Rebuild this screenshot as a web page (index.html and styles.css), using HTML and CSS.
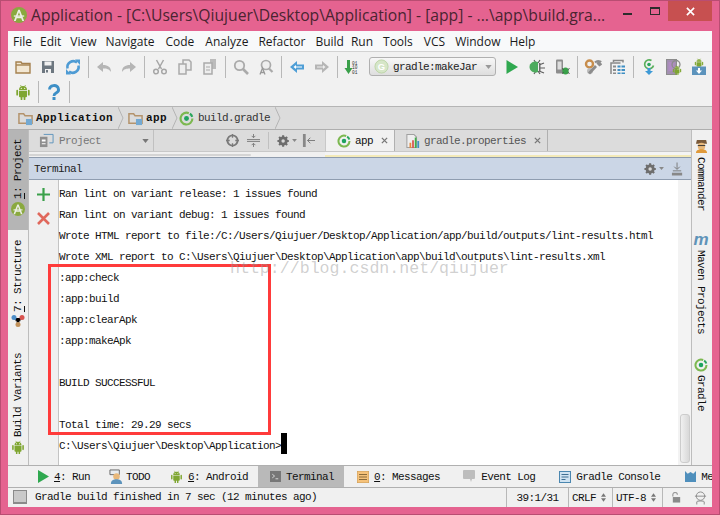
FILE: index.html
```html
<!DOCTYPE html>
<html lang="en">
<head>
<meta charset="utf-8">
<title>Application</title>
<link rel="stylesheet" href="styles.css">
</head>
<body>
<svg class="defs" width="0" height="0">
  <defs>
    <symbol id="android" viewBox="0 0 16 16">
      <path fill="#7fa631" d="M4 6a4 4 0 0 1 8 0zM4 6.7h8v5.6a1 1 0 0 1-1 1h-.6v2a.9.9 0 0 1-1.8 0v-2H7.400v2a.9.9 0 0 1-1.800 0v-2H5a1 1 0 0 1-1-1zM1.300 6.700a.9.9 0 0 1 1.800 0v4a.9.9 0 0 1-1.800 0zM12.900 6.700a.9.9 0 0 1 1.800 0v4a.9.9 0 0 1-1.800 0z"/>
      <path stroke="#7fa631" stroke-width=".7" d="M5.400 1l1 1.500M10.600 1l-1 1.500"/>
      <circle cx="6.300" cy="4.300" r=".6" fill="#fff"/><circle cx="9.700" cy="4.300" r=".6" fill="#fff"/>
    </symbol>
    <symbol id="gear" viewBox="0 0 16 16">
      <circle cx="7" cy="8" r="3.700" fill="none" stroke="#6e6e6e" stroke-width="3"/>
      <path stroke="#6e6e6e" stroke-width="2.400" d="M7 1.500v13M.5 8h13M2.400 3.400l9.200 9.200M11.600 3.400l-9.200 9.200"/>
      <circle cx="7" cy="8" r="2" fill="#d8d8d8"/>
    </symbol>
    <symbol id="gradle" viewBox="0 0 16 16">
      <path fill="none" stroke="#7cb850" stroke-width="2.300" d="M10.500 2.300A6.300 6.300 0 1 0 14.300 8"/>
      <path fill="none" stroke="#2aa65c" stroke-width="2.300" d="M11.600 2.900a6 6 0 0 1 2.500 3.300"/>
      <circle cx="8" cy="8" r="2.600" fill="#1fa35f"/>
    </symbol>
    <symbol id="crumbfolder" viewBox="0 0 16 16">
      <path fill="none" stroke="#b4936c" stroke-width="1.600" d="M1 13V3h5l1.500 2H15v8z"/>
      <rect x="8.500" y="8.500" width="6.500" height="6.500" fill="#73a9d2"/>
    </symbol>
    <symbol id="studio" viewBox="0 0 20 20">
      <circle cx="10" cy="10" r="10" fill="#8aa93f"/>
      <path fill="#ecefe6" d="M9 3.500h2l5.500 14h-2.400L12.800 14H7.200l-1.300 3.500H3.500z"/>
      <path fill="#8aa93f" d="M8 12h4l-2-5.500z"/>
      <rect x="3.500" y="10.500" width="13" height="1.600" fill="#ecefe6"/>
    </symbol>
  </defs>
</svg>

<div class="window">
  <header class="titlebar">
    <svg class="appicon" viewBox="0 0 20 20" width="16" height="16"><use href="#studio"/></svg>
    <h1 class="apptitle">Application - [C:\Users\Qiujuer\Desktop\Application] - [app] - ...\app\build.gra...</h1>
    <div class="winctl">
      <span class="wmin"></span>
      <span class="wmax"></span>
      <span class="wclose"><svg viewBox="0 0 10 10" width="9" height="9"><path stroke="#fff" stroke-width="1.800" d="M1 1l8 8M9 1l-8 8"/></svg></span>
    </div>
  </header>

  <main class="frame">
    <nav class="menubar">
      <span class="m1">File</span><span class="m2">Edit</span><span class="m3">View</span><span class="m4">Navigate</span><span class="m5">Code</span><span class="m6">Analyze</span><span class="m7">Refactor</span><span class="m8">Build</span><span class="m9">Run</span><span class="m10">Tools</span><span class="m11">VCS</span><span class="m12">Window</span><span class="m13">Help</span>
    </nav>

    <div class="toolbar">
      <div class="tbrow">
        <span class="ti"><svg viewBox="0 0 16 16"><path fill="#f2e7d3" stroke="#a5814f" stroke-width="1.400" d="M1 14V3h5l1 1.500h8V14z"/><path stroke="#a5814f" stroke-width="1.400" d="M1 6h14"/></svg></span>
        <span class="ti"><svg viewBox="0 0 16 16"><path fill="#6d7780" d="M2 2h12v12H2z"/><path fill="#f1f1f1" d="M4.500 2.500h7v4h-7zM5 10h6v4H5z"/><path fill="#6d7780" d="M6 11h2v2.500H6z"/></svg></span>
        <span class="ti"><svg viewBox="0 0 16 16"><path fill="none" stroke="#4e9bd4" stroke-width="2.600" d="M2.500 9.500a6 6 0 0 1 9.500-6M13.500 6.500a6 6 0 0 1-9.500 6"/><path fill="#4e9bd4" d="M10 .5h5v5.500zM6 15.500H1V10z"/></svg></span>
        <span class="sep"></span>
        <span class="ti"><svg viewBox="0 0 16 16"><path fill="#b5b5b5" d="M1 8l6-5v3c5 0 8 2 8 7-2-3-4-3.500-8-3.500V13z"/></svg></span>
        <span class="ti"><svg viewBox="0 0 16 16"><path fill="#b5b5b5" d="M15 8L9 3v3C4 6 1 8 1 13c2-3 4-3.500 8-3.500V13z"/></svg></span>
        <span class="sep"></span>
        <span class="ti"><svg viewBox="0 0 16 16"><path stroke="#a6a6a6" stroke-width="1.500" fill="none" d="M4.500 1l5 9M11.500 1l-5 9"/><circle cx="4" cy="12.500" r="2.300" fill="none" stroke="#a6a6a6" stroke-width="1.500"/><circle cx="12" cy="12.500" r="2.300" fill="none" stroke="#a6a6a6" stroke-width="1.500"/></svg></span>
        <span class="ti"><svg viewBox="0 0 16 16"><path fill="#eee" stroke="#aaa" stroke-width="1.500" d="M6 1h6l2 2v8H6z"/><path fill="#eee" stroke="#aaa" stroke-width="1.500" d="M2 5h7v10H2z"/></svg></span>
        <span class="ti"><svg viewBox="0 0 16 16"><path fill="#bbb" d="M8 0h6v10H8z"/><path fill="#eee" stroke="#aaa" stroke-width="1.500" d="M2 4h8v11H2z"/><path stroke="#aaa" d="M4 8h4M4 11h4"/></svg></span>
        <span class="sep"></span>
        <span class="ti"><svg viewBox="0 0 16 16"><circle cx="6.500" cy="6.500" r="4.700" fill="#eee" stroke="#aaa" stroke-width="1.800"/><path stroke="#aaa" stroke-width="2.600" d="M10 10l5 5"/></svg></span>
        <span class="ti"><svg viewBox="0 0 16 16"><circle cx="8" cy="6" r="4.500" fill="#eee" stroke="#aaa" stroke-width="1.700"/><path fill="none" stroke="#999" stroke-width="1.300" d="M2 15.500L4.500 9 7 15.500M3 13.500h3"/><path stroke="#aaa" stroke-width="2.200" d="M11 9.500l3.500 3.500"/></svg></span>
        <span class="sep"></span>
        <span class="ti"><svg viewBox="0 0 16 16"><path fill="#4e9ed6" d="M1 8l7-6v3.500h7v5H8V14z"/><path fill="#fff" d="M4.500 8L7 6v1.500h6v1H7V10z"/></svg></span>
        <span class="ti"><svg viewBox="0 0 16 16"><path fill="#b5b5b5" d="M15 8L8 2v3.500H1v5h7V14z"/><path fill="#eee" d="M11.500 8L9 6v1.500H3v1h6V10z"/></svg></span>
        <span class="sep"></span>
        <span class="ti"><svg viewBox="0 0 16 16"><path fill="#3aa04a" d="M2 1h3v8h2.500L3.500 15-.5 9H2z"/><text class="bin" x="7" y="5.500">01</text><text class="bin" x="7" y="10">10</text><text class="bin" x="7" y="14.500">01</text></svg></span>
        <span class="combo"><svg class="comboicon" viewBox="0 0 16 16" width="15" height="15"><circle cx="8" cy="8" r="7" fill="#d6e6c8" stroke="#bcd4a8"/><text class="gletter" x="8" y="11.500">G</text></svg><span class="combotext">gradle:makeJar</span><svg class="caret" viewBox="0 0 8 5" width="7" height="4"><path fill="#999" d="M0 0h8L4 5z"/></svg></span>
        <span class="ti"><svg viewBox="0 0 16 16"><path fill="#2fa84f" d="M2.500 1l11.500 7-11.500 7z"/></svg></span>
        <span class="ti"><svg viewBox="0 0 16 16"><path stroke="#5f5f5f" stroke-width="1.200" d="M5 1l2 3M11 1L9 4M10 6l5-2M10 9h6M10 12l5 2M5 15l2-3M11 15l-2-3"/><path fill="#4dab5e" d="M9 3a6 5.500 0 1 0 0 10z"/><path fill="#6b6b6b" d="M10 4h1.500v8H10z"/></svg></span>
        <span class="ti"><svg viewBox="0 0 16 16"><rect x="2" y="0.500" width="7" height="14" rx="1" fill="#8d8d8d"/><rect x="3.500" y="2.500" width="4" height="8" fill="#ddd"/><ellipse cx="11.500" cy="12" rx="3.200" ry="3.500" fill="#3aa04a"/><path stroke="#444" d="M8 9.500l1.500 1M15.500 9.500L14 10.500M8 14.500l1.500-1M15.500 14.500L14 13.500"/></svg></span>
        <span class="sep"></span>
        <span class="ti"><svg viewBox="0 0 16 16"><circle cx="4.500" cy="5" r="3.500" fill="none" stroke="#c78d4c" stroke-width="2.400"/><circle cx="5" cy="12" r="3" fill="#bbb"/><path stroke="#8c8c8c" stroke-width="2.800" d="M4 14.500l7-7.500"/><path fill="none" stroke="#8c8c8c" stroke-width="2.200" d="M10 3.500c2-2 4-1.500 5-1l-2 2 1.500 1.500 2-1.500"/></svg></span>
        <span class="ti"><svg viewBox="0 0 16 16"><path fill="none" stroke="#888" stroke-width="1.500" d="M3.500 3V1.500H13v2M1 15V4h9.500"/><path fill="#8c8c8c" d="M3 6.500h3v2H3zM3 10h3v2H3zM3 13.500h3V15H3z"/><path fill="#3f8fc4" d="M7.500 6.500h3v2h-3zM11.500 6.500h3.500v2h-3.500zM7.500 10h3v2h-3zM11.500 10h3.500v2h-3.500zM7.500 13.500h3V15h-3zM11.500 13.500h3.500V15h-3.500z"/></svg></span>
        <span class="sep"></span>
        <span class="ti"><svg viewBox="0 0 16 16"><path fill="none" stroke="#59b05b" stroke-width="1.700" d="M10.500 1.500a4.500 4.500 0 1 0 2 5"/><circle cx="8" cy="5.500" r="1.800" fill="#2aa65c"/><path fill="#3e9ad6" d="M6.500 9h3v3H12l-4 4-4-4h2.500z"/></svg></span>
        <span class="ti"><svg viewBox="0 0 16 16"><rect x="0.500" y="0.500" width="10" height="15" fill="#a28fb0" stroke="#8c8c8c"/><rect x="2.500" y="3" width="6" height="9" fill="#b08bc4"/><circle cx="10" cy="5.500" r="4" fill="none" stroke="#8c8c8c" stroke-width="1.300"/><use href="#android" x="6" y="6" width="10" height="10"/></svg></span>
        <span class="ti tilast"><svg viewBox="0 0 16 16"><use href="#android" x="2" y="-1" width="12" height="10"/><path fill="#5c93bc" d="M1 7.500h14V16H1z"/><path fill="#fff" d="M7 9h2v2.500h2L8 15l-3-3.500h2z"/></svg></span>
      </div>
      <div class="tbrow">
        <span class="ti"><svg viewBox="0 0 16 16"><use href="#android"/></svg></span>
        <span class="sep"></span>
        <span class="ti"><svg viewBox="0 0 16 16"><path fill="none" stroke="#3d8fc6" stroke-width="2.800" d="M3.500 5.500a4.500 4 0 1 1 6.500 3.600c-1.600.8-2 1.500-2 3"/><rect x="6.500" y="13" width="3" height="3" fill="#3d8fc6"/></svg></span>
        <span class="sep"></span>
      </div>
    </div>

    <div class="crumbs">
      <svg class="cfold" viewBox="0 0 16 16" width="15" height="15"><use href="#crumbfolder"/></svg><b class="cbold">Application</b><svg class="chev" viewBox="0 0 6 22" width="6" height="22"><path fill="none" stroke="#b4b4b4" d="M0 0l5 11-5 11"/></svg>
      <svg class="cfold2" viewBox="0 0 16 16" width="15" height="15"><use href="#crumbfolder"/></svg><b class="cbold">app</b><svg class="chev" viewBox="0 0 6 22" width="6" height="22"><path fill="none" stroke="#b4b4b4" d="M0 0l5 11-5 11"/></svg>
      <svg class="cgradle" viewBox="0 0 16 16" width="15" height="15"><use href="#gradle"/></svg><span class="cfile">build.gradle</span><svg class="chev" viewBox="0 0 6 22" width="6" height="22"><path fill="none" stroke="#b4b4b4" d="M0 0l5 11-5 11"/></svg>
    </div>

    <div class="workspace">
      <aside class="rail railleft">
        <div class="railtab active">
          <span class="vtext vflip"><u>1</u>: Project</span>
          <svg viewBox="0 0 20 20" width="14" height="14"><use href="#studio"/></svg>
        </div>
        <div class="railtab rstruct">
          <span class="vtext vflip"><u>7</u>: Structure</span>
          <svg viewBox="0 0 14 14" width="14" height="14"><path stroke="#888" d="M3 4l4 6 4-6"/><circle cx="3" cy="3.500" r="2.500" fill="#4e8fc9"/><circle cx="11" cy="3.500" r="2.500" fill="#d9534f"/><circle cx="7" cy="10.500" r="2.500" fill="#c1915a"/></svg>
        </div>
        <div class="railtab rvariants">
          <span class="vtext vflip">Build Variants</span>
          <svg viewBox="0 0 16 16" width="14" height="14"><use href="#android"/></svg>
        </div>
      </aside>

      <section class="center">
        <div class="toolrow">
          <div class="projcombo">
            <svg viewBox="0 0 16 16" width="15" height="15"><path fill="#8f8f8f" d="M1 4h8v11H1z"/><path fill="#fff" d="M3 7h4v2H3zM3 11h4v1H3z"/><path fill="none" stroke="#5c93bc" d="M5 1.500h10v9h-4"/></svg>
            <span class="projlabel">Project</span>
            <svg class="projcaret" viewBox="0 0 8 5" width="7" height="4"><path fill="#777" d="M0 0h8L4 5z"/></svg>
          </div>
          <div class="projtools">
            <svg class="pt1" viewBox="0 0 14 14" width="13" height="13"><circle cx="7" cy="7" r="5.500" fill="none" stroke="#7a7a7a" stroke-width="2"/><path stroke="#7a7a7a" stroke-width="1.400" d="M7 0v4M7 10v4M0 7h4M10 7h4"/></svg>
            <svg class="pt2" viewBox="0 0 14 14" width="13" height="13"><path stroke="#7a7a7a" fill="none" d="M0 6h14M0 8h14M7 0v4M5 2l2 2 2-2M7 14v-4M5 12l2-2 2 2"/></svg>
            <span class="pt3"></span>
            <svg class="pt4" viewBox="0 0 16 16" width="14" height="14"><use href="#gear"/></svg>
            <svg class="pt5" viewBox="0 0 8 5" width="5" height="3"><path fill="#888" d="M0 0h8L4 5z"/></svg>
            <svg class="pt6" viewBox="0 0 14 14" width="13" height="13"><path fill="#888" d="M1 0h3v14H1z"/><path stroke="#777" d="M6 7h8M9 4L6 7l3 3" fill="none"/></svg>
          </div>
          <div class="edtab edactive">
            <svg viewBox="0 0 16 16" width="14" height="14"><use href="#gradle"/></svg>
            <span class="edlabel dark">app</span>
            <svg class="edx" viewBox="0 0 8 8" width="7" height="7"><path stroke="#777" stroke-width="1.500" d="M1 1l6 6M7 1L1 7"/></svg>
          </div>
          <div class="edtab edother">
            <svg viewBox="0 0 16 16" width="14" height="14"><path fill="#eee" stroke="#a0a0a0" stroke-width="1.200" d="M1 .5h8l3 3v12H1z"/><path fill="#e58a3a" d="M4 10h2v6H4z"/><path fill="#d9534f" d="M7 7h2v9H7z"/><path fill="#3fae4a" d="M10 4h2v12h-2z"/><path fill="#3f8fc4" d="M13 8h2v8h-2z"/></svg>
            <span class="edlabel">gradle.properties</span>
            <svg class="edx" viewBox="0 0 8 8" width="7" height="7"><path stroke="#777" stroke-width="1.500" d="M1 1l6 6M7 1L1 7"/></svg>
          </div>
        </div>
        <div class="tabstrip"><div class="stripleft"><span class="stripbar"></span></div><div class="stripright"></div></div>

        <div class="termhead">
          <span class="termtitle">Terminal</span>
          <svg class="thgear" viewBox="0 0 16 16" width="14" height="14"><use href="#gear"/></svg>
          <svg class="thcaret" viewBox="0 0 8 5" width="5" height="3"><path fill="#888" d="M0 0h8L4 5z"/></svg>
          <svg class="thhide" viewBox="0 0 14 14" width="13" height="14"><path stroke="#777" fill="none" d="M6.500 0v7M3.500 4.500l3 3 3-3M2 9h9"/><path fill="#888" d="M1 11h11v3H1z"/></svg>
        </div>

        <div class="termbody">
          <div class="gutter">
            <svg viewBox="0 0 13 13" width="13" height="13"><path stroke="#3aa04a" stroke-width="2.200" d="M6.500 0v13M0 6.500h13"/></svg>
            <svg viewBox="0 0 13 13" width="13" height="13"><path stroke="#e0685c" stroke-width="2.600" d="M1 1l11 11M12 1L1 12"/></svg>
          </div>
          <div class="output">
            <div class="ln">Ran lint on variant release: 1 issues found</div>
            <div class="ln">Ran lint on variant debug: 1 issues found</div>
            <div class="ln">Wrote HTML report to file:/C:/Users/Qiujuer/Desktop/Application/app/build/outputs/lint-results.html</div>
            <div class="ln">Wrote XML report to C:\Users\Qiujuer\Desktop\Application\app\build\outputs\lint-results.xml</div>
            <div class="ln">:app:check</div>
            <div class="ln">:app:build</div>
            <div class="ln">:app:clearApk</div>
            <div class="ln">:app:makeApk</div>
            <div class="ln">&nbsp;</div>
            <div class="ln">BUILD SUCCESSFUL</div>
            <div class="ln">&nbsp;</div>
            <div class="ln">Total time: 29.29 secs</div>
            <div class="ln">C:\Users\Qiujuer\Desktop\Application&gt;<span class="cursor"></span></div>
            <div class="redbox"></div>
            <div class="watermark">http://blog.csdn.net/qiujuer</div>
          </div>
          <div class="scrolltrack"><span class="thumb"></span></div>
        </div>
      </section>

      <aside class="rail railright">
        <svg class="rr1" viewBox="0 0 14 14" width="13" height="13"><path fill="#7a5a3a" d="M2 0h10l1 4H1z"/><circle cx="7" cy="7" r="4" fill="#e8b87a"/><path fill="#e09a3a" d="M1 14c0-3 3-4 6-4s6 1 6 4z"/><path fill="#333" d="M3 5.500h8v1H3z"/></svg>
        <span class="vtext rt1">Commander</span>
        <span class="mlogo">m</span>
        <span class="vtext rt2">Maven Projects</span>
        <svg class="rr3" viewBox="0 0 16 16" width="14" height="14"><use href="#gradle"/></svg>
        <span class="vtext rt3">Gradle</span>
      </aside>
    </div>

    <div class="bottomtabs">
      <span class="bt b1"><svg viewBox="0 0 12 14" width="11" height="13"><path fill="#2fa84f" d="M0 0l12 7-12 7z"/></svg><span><u>4</u>: Run</span></span>
      <span class="bt b2"><svg viewBox="0 0 16 16" width="15" height="15"><path fill="#e8ecef" stroke="#666" d="M1 1h10v5H1z"/><circle cx="8" cy="8" r="3.500" fill="#e8b87a"/><path fill="#5c93bc" d="M2 16c0-4 3-5 6-5s6 1 6 5z"/></svg><span>TODO</span></span>
      <span class="bt b3"><svg viewBox="0 0 16 16" width="13" height="13"><use href="#android"/></svg><span><u>6</u>: Android</span></span>
      <span class="bt b4"><svg viewBox="0 0 12 12" width="11" height="11"><path fill="#777" d="M0 0h12v12H0z"/><path fill="none" stroke="#ddd" d="M2.500 3.500l2.500 2-2.500 2M6 8.500h3"/></svg><span>Terminal</span></span>
      <span class="bt b5"><svg viewBox="0 0 12 12" width="12" height="12"><rect width="12" height="12" fill="#f6c27a" stroke="#c79a5a"/><path stroke="#8a6a3a" d="M2 3.500h8M2 6h8M2 8.500h8"/></svg><span><u>0</u>: Messages</span></span>
      <span class="bt b6"><svg viewBox="0 0 12 13" width="12" height="13"><path fill="#bdbdbd" d="M1 0h10a1 1 0 0 1 1 1v7a1 1 0 0 1-1 1H9l-1 3-1-3H1a1 1 0 0 1-1-1V1a1 1 0 0 1 1-1z"/></svg><span>Event Log</span></span>
      <span class="bt b7"><svg viewBox="0 0 12 12" width="12" height="12"><rect x=".5" y=".5" width="11" height="11" fill="#cfe3f2" stroke="#4b87b0"/><path stroke="#3f6f92" d="M2.500 3.500h7M2.500 6h7M2.500 8.500h4"/></svg><span>Gradle Console</span></span>
      <span class="bt b8"><svg viewBox="0 0 12 12" width="11" height="11"><path fill="#4f8fbc" d="M0 0l3 3 3-2 3 2 3-3v12H0z"/></svg><span>Me</span></span>
    </div>

    <footer class="status">
      <span class="sbox"></span>
      <span class="smsg">Gradle build finished in 7 sec (12 minutes ago)</span>
      <span class="scell c1">39:1/31</span>
      <span class="scell c2">CRLF<svg viewBox="0 0 6 10" width="5" height="9"><path fill="#777" d="M3 0l3 4H0zM3 10L0 6h6z"/></svg></span>
      <span class="scell c3">UTF-8<svg viewBox="0 0 6 10" width="5" height="9"><path fill="#777" d="M3 0l3 4H0zM3 10L0 6h6z"/></svg></span>
      <span class="scell c4">
        <svg viewBox="0 0 12 12" width="11" height="11"><path fill="none" stroke="#9a9a9a" stroke-width="1.300" d="M2 5V3a2.500 2.500 0 0 1 5 0"/><rect x="2" y="5.500" width="8" height="6" fill="#8a8a8a"/></svg>
        <svg viewBox="0 0 14 14" width="13" height="14"><circle cx="7" cy="5" r="4.500" fill="none" stroke="#888"/><path fill="none" stroke="#888" d="M1 5h12M3 14v-3c0-1 8-1 8 0v3"/></svg>
      </span>
    </footer>
  </main>
</div>
</body>
</html>
```
FILE: styles.css
```css
* { box-sizing: border-box; }
html, body { margin: 0; padding: 0; }
body {
  width: 720px;
  height: 515px;
  overflow: hidden;
  background: #e56390;
  font-family: "Liberation Mono", monospace;
  font-size: 11px;
  color: #111;
}
.defs { position: absolute; }
svg { display: block; flex: none; }
.window {
  height: 515px;
  padding: 0 8px 7px;
  border: 1px solid #b94d72;
  display: flex;
  flex-direction: column;
  margin: 0;
}
.titlebar {
  height: 30px;
  flex: none;
  display: flex;
  align-items: flex-start;
  margin: 0 -1px 0 -7px;
  padding-left: 3px;
  position: relative;
}
.appicon { margin-top: 6px; margin-left: 6px; }
.apptitle {
  margin: 0 0 0 4px;
  font: 400 15.7px/29px "Open Sans", sans-serif;
  color: #4a2431;
  white-space: nowrap;
}
.winctl { position: absolute; right: 0; top: 0; height: 20px; width: 96px; }
.wmin { position: absolute; left: 7px; top: 12px; width: 9px; height: 2px; background: #2c2c2c; }
.wmax { position: absolute; left: 34px; top: 6px; width: 10px; height: 8px; border: 1px solid #2c2c2c; border-top-width: 2px; }
.wclose {
  position: absolute;
  right: 0;
  top: 0;
  width: 44px;
  height: 20px;
  background: #c75050;
  display: flex;
  align-items: center;
  justify-content: center;
}
.frame {
  flex: 1;
  min-height: 0;
  margin: 0 -1px;
  display: flex;
  flex-direction: column;
  background: #f1f1f1;
  overflow: hidden;
}
.menubar {
  height: 21px;
  flex: none;
  background: #f8f9fa;
  border-bottom: 1px solid #d2d2d2;
  display: flex;
  align-items: center;
  font: 12px "Open Sans", sans-serif;
  color: #1a1a1a;
  padding-left: 5px;
  white-space: nowrap;
}
.m2 { margin-left: 8px; }
.m3 { margin-left: 9px; }
.m4 { margin-left: 9px; }
.m5 { margin-left: 11px; }
.m6 { margin-left: 11px; }
.m7 { margin-left: 10px; }
.m8 { margin-left: 10px; }
.m9 { margin-left: 7px; }
.m10 { margin-left: 10px; }
.m11 { margin-left: 11px; }
.m12 { margin-left: 10px; }
.m13 { margin-left: 9px; }
.toolbar {
  height: 55px;
  flex: none;
  background: #f1f1f1;
  border-bottom: 1px solid #b5b5b5;
  padding: 2px 0 0 2px;
}
.tbrow { height: 25px; display: flex; align-items: center; }
.ti { width: 25px; height: 24px; display: flex; align-items: center; justify-content: center; flex: none; }
.ti svg { width: 16px; height: 16px; overflow: visible; }
.sep { width: 1px; height: 22px; margin: 0 2px 0 3px; background: #b8b8b8; flex: none; }
.bin { font: 4.5px "Liberation Mono", monospace; fill: #333; }
.gletter { font: bold 10px "Liberation Sans", sans-serif; fill: #fff; text-anchor: middle; }
.combo {
  width: 127px;
  height: 19px;
  margin: 0 3px 0 4px;
  flex: none;
  border: 1px solid #b0b0b0;
  border-radius: 3px;
  background: linear-gradient(#f7f7f7, #dedede);
  display: flex;
  align-items: center;
  padding-left: 4px;
  color: #222;
}
.combotext { margin-left: 4px; letter-spacing: -.6px; white-space: nowrap; }
.caret { margin-left: 8px; }
.crumbs {
  height: 23px;
  flex: none;
  background: #dcdcdc;
  border-bottom: 1px solid #aeaeae;
  display: flex;
  align-items: center;
  padding-left: 10px;
  letter-spacing: -.6px;
  white-space: nowrap;
}
.cbold { margin-left: 3px; letter-spacing: .4px; font-weight: 700; }
.chev { margin-left: 5px; }
.cfold2 { margin-left: 4px; }
.cgradle { margin-left: 1px; }
.cfile { margin-left: 4px; color: #333; }
.workspace { flex: 1; min-height: 0; display: flex; }
.rail { flex: none; background: #f0f0f0; position: relative; }
.railleft { width: 21px; border-right: 1px solid #bdbdbd; display: flex; flex-direction: column; }
.railtab { display: flex; flex-direction: column; align-items: center; }
.railtab.active { background: #b5b5b5; height: 100px; padding-top: 9px; gap: 3px; }
.rstruct { margin-top: 10px; gap: 2px; }
.rvariants { margin-top: 25px; gap: 3px; }
.vtext { writing-mode: vertical-rl; letter-spacing: -.6px; white-space: nowrap; color: #111; }
.vflip { transform: rotate(180deg); }
.center { flex: 1; min-width: 0; display: flex; flex-direction: column; background: #dcdcdc; }
.toolrow { height: 22px; flex: none; display: flex; background: #dcdcdc; border-bottom: 1px solid #c8c8c8; }
.projcombo {
  width: 125px;
  display: flex;
  align-items: center;
  padding-left: 10px;
  border-right: 1px solid #c0c0c0;
}
.projlabel { margin-left: 5px; color: #777; letter-spacing: -.6px; }
.projcaret { margin-left: 41px; }
.projtools { width: 171px; display: flex; align-items: center; position: relative; }
.pt1 { margin-left: 72px; }
.pt2 { margin-left: 8px; }
.pt3 { width: 1px; height: 17px; margin-left: 8px; background: #c0c0c0; }
.pt4 { margin-left: 8px; }
.pt5 { margin-left: 1px; }
.pt6 { margin-left: 5px; }
.edtab { display: flex; align-items: center; letter-spacing: -.6px; border-right: 1px solid #b0b0b0; }
.edactive { width: 70px; padding-left: 11px; background: #f1f1f1; border-left: 1px solid #c8c8c8; }
.edother { width: 153px; padding-left: 11px; }
.edlabel { margin-left: 4px; color: #555; }
.edlabel.dark { color: #111; margin-left: 4px; }
.edx { margin-left: 8px; }
.tabstrip { height: 6px; flex: none; background: #f0f0f0; border-bottom: 1px solid #8e9bad; display: flex; }
.stripleft { width: 296px; flex: none; padding-top: 2px; }
.stripbar { display: block; width: 222px; height: 2px; background: #d4d4d4; border-radius: 1px; }
.stripright { flex: 1; background: #f4f4f4; border-bottom: 2px solid #f3eab8; }
.termhead {
  height: 22px;
  flex: none;
  background: #cbd6e6;
  border-bottom: 1px solid #8f9db0;
  display: flex;
  align-items: center;
  padding-left: 5px;
  color: #222;
}
.termtitle { letter-spacing: -.6px; }
.thgear { margin-left: 562px; }
.thcaret { margin-left: 1px; }
.thhide { margin-left: 7px; }
.termbody { flex: 1; min-height: 0; display: flex; background: #fff; }
.gutter {
  width: 30px;
  flex: none;
  background: #f0f0f0;
  border-right: 1px solid #c4c4c4;
  display: flex;
  flex-direction: column;
  align-items: center;
  padding-top: 8px;
  gap: 11px;
}
.output { flex: 1; min-width: 0; position: relative; padding-top: 4px; letter-spacing: -.6px; white-space: nowrap; color: #111; }
.ln { height: 21px; line-height: 21px; }
.cursor { display: inline-block; width: 6px; height: 21px; background: #000; vertical-align: middle; transform: translateY(-3px); }
.redbox { position: absolute; left: -11px; top: 84px; width: 223px; height: 171px; border: 3px solid #ff3b3b; }
.watermark { position: absolute; left: 171px; top: 79px; font-size: 16.6px; letter-spacing: 0; color: rgba(150, 150, 150, .45); }
.scrolltrack { width: 13px; flex: none; background: #f3f3f3; display: flex; flex-direction: column; justify-content: flex-end; }
.thumb { display: block; width: 10px; height: 49px; margin: 0 1px 2px 2px; background: linear-gradient(90deg, #f0f0f0, #d8d8d8); border: 1px solid #ccc; border-radius: 3px; }
.railright { width: 21px; border-left: 1px solid #bdbdbd; display: flex; flex-direction: column; align-items: center; padding: 10px 2px 0 0; }
.rt1 { margin-top: 4px; }
.mlogo { margin-top: 21px; font: italic 700 17px/15px "Liberation Sans", sans-serif; color: #5f93b8; }
.rt2 { margin-top: 3px; }
.rr3 { margin-top: 24px; }
.rt3 { margin-top: 3px; }
.bottomtabs {
  height: 22px;
  flex: none;
  background: #f0f0f0;
  border-top: 1px solid #b0b0b0;
  display: flex;
  align-items: stretch;
  letter-spacing: -.6px;
  white-space: nowrap;
  overflow: hidden;
}
.bt { display: flex; align-items: center; gap: 5px; flex: none; }
.b1 { margin-left: 30px; }
.b2 { margin-left: 19px; gap: 2px; }
.b3 { margin-left: 20px; }
.b4 { margin-left: 10px; background: #b9b9b9; padding: 0 10px 0 12px; }
.b5 { margin-left: 13px; gap: 5px; }
.b6 { margin-left: 23px; gap: 6px; }
.b7 { margin-left: 24px; }
.b8 { margin-left: 25px; }
.status {
  height: 20px;
  flex: none;
  background: #f0f0f0;
  border-top: 1px solid #b0b0b0;
  display: flex;
  align-items: stretch;
  letter-spacing: -.6px;
  white-space: nowrap;
}
.sbox { width: 14px; height: 14px; margin: 2px 0 0 5px; background: #c9c9c9; border: 1px solid #8a8a8a; border-bottom-width: 2px; flex: none; }
.smsg { width: 471px; margin-left: 8px; line-height: 18px; }
.scell { display: flex; align-items: center; border-left: 1px solid #b8b8b8; flex: none; }
.c1 { width: 62px; justify-content: center; }
.c2 { width: 44px; padding-left: 3px; gap: 5px; }
.c3 { width: 50px; padding-left: 3px; gap: 5px; }
.c4 { flex: 1; padding-left: 8px; gap: 12px; }
```
